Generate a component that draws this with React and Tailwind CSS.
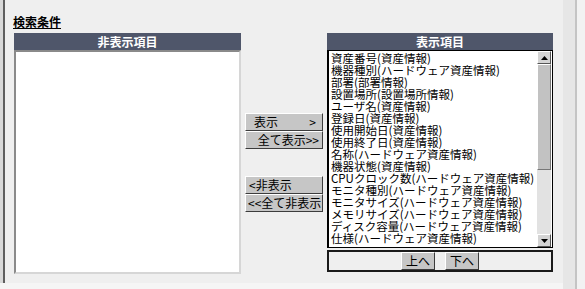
const shown = [
  "資産番号(資産情報)",
  "機器種別(ハードウェア資産情報)",
  "部署(部署情報)",
  "設置場所(設置場所情報)",
  "ユーザ名(資産情報)",
  "登録日(資産情報)",
  "使用開始日(資産情報)",
  "使用終了日(資産情報)",
  "名称(ハードウェア資産情報)",
  "機器状態(資産情報)",
  "CPUクロック数(ハードウェア資産情報)",
  "モニタ種別(ハードウェア資産情報)",
  "モニタサイズ(ハードウェア資産情報)",
  "メモリサイズ(ハードウェア資産情報)",
  "ディスク容量(ハードウェア資産情報)",
  "仕様(ハードウェア資産情報)",
];

const font = { fontFamily: '"Noto Sans CJK JP", "Liberation Sans", sans-serif' };

function Btn({ children, className = "" }) {
  return (
    <button
      className={`h-[18px] bg-[#c6c6c6] border border-t-white border-l-white border-b-[#3c3c3c] border-r-[#3c3c3c] text-[12px] leading-[16px] text-black flex items-center ${className}`}
    >
      {children}
    </button>
  );
}

function Header({ children }) {
  return (
    <div className="h-[17px] bg-[#4f566a] text-white text-[12px] font-bold leading-[17px] text-center">
      {children}
    </div>
  );
}

export default function App() {
  return (
    <div className="w-[585px] h-[289px] bg-[#f5f5f5] flex overflow-hidden" style={font}>
      <div className="w-[3px] h-[283px] bg-[#d8d8d8]" />
      <div className="w-[2px] h-[283px] bg-[#5e5e5e]" />
      <div className="w-[558px] h-[283px] bg-[#efefef] flex flex-col">
        <div className="pl-2 pt-[8px] h-[33px]">
          <span className="text-[12px] font-bold underline leading-[16px]">検索条件</span>
        </div>
        <div className="flex pl-[9px]">
          <div className="w-[227px] flex flex-col">
            <Header>非表示項目</Header>
            <div className="h-[224px] bg-white border-2 border-t-[#8a8a8a] border-l-[#8a8a8a] border-b-[#d6d6d6] border-r-[#d6d6d6]" />
          </div>
          <div className="w-[86px] flex flex-col px-1 pt-[80px]">
            <Btn className="justify-between pl-[8px] pr-[6px]">
              <span>表示</span>
              <span>&gt;</span>
            </Btn>
            <Btn className="justify-end pr-[3px]">全て表示&gt;&gt;</Btn>
            <div className="h-[27px]" />
            <Btn className="justify-start pl-[3px]">&lt;非表示</Btn>
            <Btn className="justify-start pl-[2px]">&lt;&lt;全て非表示</Btn>
          </div>
          <div className="w-[226px] flex flex-col">
            <Header>表示項目</Header>
            <div className="h-[198px] bg-white border border-black border-l-2 flex">
              <div className="flex-1 pl-[2px] pt-[1px] text-[11.5px] leading-[12px] text-black overflow-hidden">
                {shown.map((s) => (
                  <div key={s} className="whitespace-nowrap h-[12px]">
                    {s}
                  </div>
                ))}
              </div>
              <div className="w-[14px] mr-[1px] flex flex-col bg-[#e2e2e2]">
                <div className="h-[13px] bg-[#d4d4d4] border border-t-white border-l-white border-b-[#555] border-r-[#555] flex items-center justify-center">
                  <svg width="7" height="4" viewBox="0 0 7 4">
                    <polygon points="3.5,0 7,4 0,4" fill="#000" />
                  </svg>
                </div>
                <div className="h-[106px] bg-[#c2c2c2] border border-t-white border-l-white border-b-[#777] border-r-[#777]" />
                <div className="flex-1" />
                <div className="h-[13px] bg-[#d4d4d4] border border-t-white border-l-white border-b-[#555] border-r-[#555] flex items-center justify-center">
                  <svg width="7" height="4" viewBox="0 0 7 4">
                    <polygon points="0,0 7,0 3.5,4" fill="#000" />
                  </svg>
                </div>
              </div>
            </div>
            <div className="mt-[2px] h-[22px] border-2 border-[#1a1a1a] bg-[#efefef] flex items-center justify-center gap-[10px]">
              <Btn className="w-[34px] justify-center">上へ</Btn>
              <Btn className="w-[34px] justify-center">下へ</Btn>
            </div>
          </div>
        </div>
      </div>
      <div className="w-[12px] h-[289px] bg-[#e6e6e6]" />
      <div className="w-[2px] h-[289px] bg-[#c4c4c4]" />
      <div className="flex-1 h-[289px] bg-[#f2f2f2]" />
    </div>
  );
}
